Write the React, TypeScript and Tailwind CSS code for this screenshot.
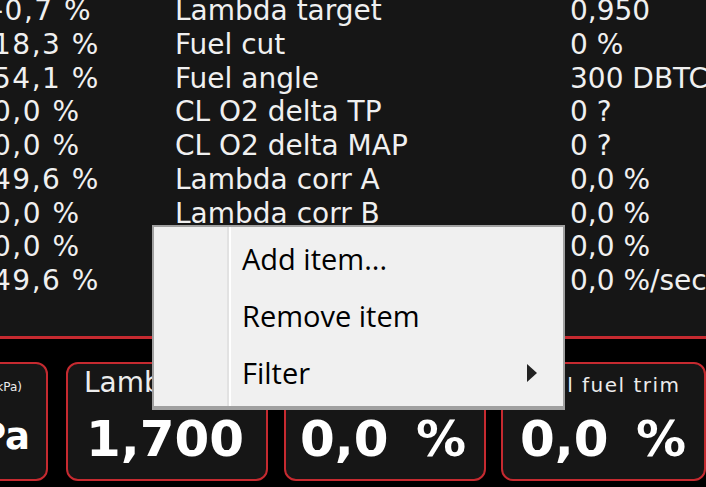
const rows = [
  ["-0,7 %", "Lambda target", "0,950"],
  ["18,3 %", "Fuel cut", "0 %"],
  ["54,1 %", "Fuel angle", "300 DBTC"],
  ["0,0 %", "CL O2 delta TP", "0 ?"],
  ["0,0 %", "CL O2 delta MAP", "0 ?"],
  ["49,6 %", "Lambda corr A", "0,0 %"],
  ["0,0 %", "Lambda corr B", "0,0 %"],
  ["0,0 %", "Lambda corr C", "0,0 %"],
  ["49,6 %", "Trim rate", "0,0 %/sec"],
];

function Gauge({
  label,
  value,
  className,
  labelClass,
  valueClass = "mt-[16px] text-[50px] leading-[50px]",
}: {
  label: string;
  value: string;
  className: string;
  labelClass: string;
  valueClass?: string;
}) {
  return (
    <div
      className={`h-[119px] shrink-0 rounded-[12px] border-2 border-[#c62a30] bg-[#161616] pt-[4px] ${className}`}
    >
      <div className={`h-[30px] whitespace-nowrap text-[#ececec] ${labelClass}`}>{label}</div>
      <div
        className={`whitespace-nowrap font-bold text-white [word-spacing:10px] ${valueClass}`}
      >
        {value}
      </div>
    </div>
  );
}

export default function App() {
  return (
    <div className="relative h-[487px] w-[706px] overflow-hidden bg-black font-['DejaVu_Sans',sans-serif]">
      {/* Data list panel */}
      <div className="h-[339px] overflow-hidden border-b-[3px] border-[#c62a30] bg-[#161616]">
        <div className="-mt-[6px] grid grid-cols-[175px_395px_1fr] whitespace-nowrap text-[28px] leading-[33.75px] text-[#f0f0f0]">
          {rows.map((r, i) => (
            <div key={i} className="contents">
              <div className="-ml-[7px] tracking-[1.5px]">{r[0]}</div>
              <div>{r[1]}</div>
              <div>{r[2]}</div>
            </div>
          ))}
        </div>
      </div>

      {/* Gauges */}
      <div className="mt-[23px] flex">
        <Gauge
          label="Manifold pressure (kPa)"
          value="101,3 kPa"
          className="-ml-[154px] w-[202px] flex flex-col items-end"
          labelClass="pr-[24px] text-[12px] leading-[38px]"
          valueClass="mt-[20px] pr-[16px] text-[37px] leading-[37px] [word-spacing:4px]"
        />
        <Gauge
          label="Lambda sensor"
          value="1,700"
          className="ml-[18px] w-[202px] pl-[18px]"
          labelClass="-ml-[2px] text-[28px] leading-[30px]"
        />
        <Gauge
          label="Fuel trim"
          value="0,0 %"
          className="ml-[16px] w-[202px] pl-[14px]"
          labelClass="text-[20px] leading-[34px]"
        />
        <Gauge
          label="Total fuel trim"
          value="0,0 %"
          className="ml-[15px] w-[205px] pl-[17px]"
          labelClass="text-[20px] leading-[34px] tracking-[1.5px]"
        />
      </div>

      {/* Context menu */}
      <div className="absolute left-[152px] top-[225px] h-[185px] w-[413px] border-2 border-b-4 border-[#a0a0a0] bg-[#f0f0f0] font-['Open_Sans',sans-serif] text-[29px] text-black">
        <div className="flex h-full">
          <div className="w-[75px] shrink-0 border-r-2 border-[#e2e2e2]" />
          <div className="flex-1 border-l-2 border-white pt-[3px]">
            <div className="flex h-[57px] items-center pl-[11px]">Add item...</div>
            <div className="flex h-[57px] items-center pl-[11px]">Remove item</div>
            <div className="flex h-[57px] items-center justify-between pl-[11px] pr-[26px]">
              <span>Filter</span>
              <span className="h-0 w-0 border-y-[9px] border-l-[10px] border-y-transparent border-l-[#222]" />
            </div>
          </div>
        </div>
      </div>
    </div>
  );
}
